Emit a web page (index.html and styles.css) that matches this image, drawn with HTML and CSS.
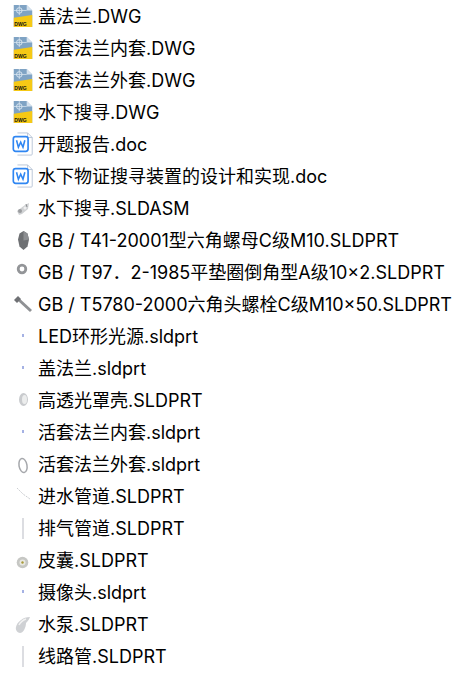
FILE: index.html

```html
<!DOCTYPE html>
<html lang="zh-CN">
<head>
  <meta charset="UTF-8">
  <title>文件列表</title>
  <meta name="viewport" content="width=device-width, initial-scale=1.0">
  <link rel="stylesheet" href="styles.css">
</head>
<body>
  <ul class="file-list">
    <li class="file"><svg class="icon" viewBox="0 0 24 26"><path d="M2 1h14l6 6v18H2z" fill="#7fa3c4"/><path d="M16 1l6 6h-6z" fill="#d5e2ee"/><circle cx="8" cy="7" r="3" fill="none" stroke="#dce8f2"/><path d="M2 7h14M8 1v11" stroke="#dce8f2" stroke-width=".8"/><path d="M2 15l20-3v13H2z" fill="#f6c915"/><text x="2.500" y="24" class="dwg-label">DWG</text></svg><span>盖法兰.DWG</span></li>
    <li class="file"><svg class="icon" viewBox="0 0 24 26"><path d="M2 1h14l6 6v18H2z" fill="#7fa3c4"/><path d="M16 1l6 6h-6z" fill="#d5e2ee"/><circle cx="8" cy="7" r="3" fill="none" stroke="#dce8f2"/><path d="M2 7h14M8 1v11" stroke="#dce8f2" stroke-width=".8"/><path d="M2 15l20-3v13H2z" fill="#f6c915"/><text x="2.500" y="24" class="dwg-label">DWG</text></svg><span>活套法兰内套.DWG</span></li>
    <li class="file"><svg class="icon" viewBox="0 0 24 26"><path d="M2 1h14l6 6v18H2z" fill="#7fa3c4"/><path d="M16 1l6 6h-6z" fill="#d5e2ee"/><circle cx="8" cy="7" r="3" fill="none" stroke="#dce8f2"/><path d="M2 7h14M8 1v11" stroke="#dce8f2" stroke-width=".8"/><path d="M2 15l20-3v13H2z" fill="#f6c915"/><text x="2.500" y="24" class="dwg-label">DWG</text></svg><span>活套法兰外套.DWG</span></li>
    <li class="file"><svg class="icon" viewBox="0 0 24 26"><path d="M2 1h14l6 6v18H2z" fill="#7fa3c4"/><path d="M16 1l6 6h-6z" fill="#d5e2ee"/><circle cx="8" cy="7" r="3" fill="none" stroke="#dce8f2"/><path d="M2 7h14M8 1v11" stroke="#dce8f2" stroke-width=".8"/><path d="M2 15l20-3v13H2z" fill="#f6c915"/><text x="2.500" y="24" class="dwg-label">DWG</text></svg><span>水下搜寻.DWG</span></li>
    <li class="file"><svg class="icon" viewBox="0 0 24 26"><path d="M6 1h11l5 5v18a1 1 0 0 1-1 1H6" fill="#fff" stroke="#b6c3d6"/><path d="M17 1v5h5" fill="none" stroke="#b6c3d6"/><rect x="1.500" y="5" width="16" height="16" rx="2.500" fill="#fff" stroke="#2f86f2" stroke-width="1.800"/><path d="M5 9l2 7.500 2.500-5.500 2.500 5.500 2-7.500" fill="none" stroke="#2f86f2" stroke-width="1.700"/></svg><span>开题报告.doc</span></li>
    <li class="file"><svg class="icon" viewBox="0 0 24 26"><path d="M6 1h11l5 5v18a1 1 0 0 1-1 1H6" fill="#fff" stroke="#b6c3d6"/><path d="M17 1v5h5" fill="none" stroke="#b6c3d6"/><rect x="1.500" y="5" width="16" height="16" rx="2.500" fill="#fff" stroke="#2f86f2" stroke-width="1.800"/><path d="M5 9l2 7.500 2.500-5.500 2.500 5.500 2-7.500" fill="none" stroke="#2f86f2" stroke-width="1.700"/></svg><span>水下物证搜寻装置的设计和实现.doc</span></li>
    <li class="file">
      <svg class="icon" viewBox="0 0 24 24"><path d="M6 15l8-6 4-2-1 6-6 5-3 1z" fill="#cfd1d3"/><circle cx="9" cy="15" r="2" fill="#9a9c9f"/><circle cx="14" cy="12" r="1.500" fill="#eeeeef"/><path d="M15 8l1 3" stroke="#8f9194"/></svg>
      <span>水下搜寻.SLDASM</span>
    </li>
    <li class="file">
      <svg class="icon" viewBox="0 0 24 24"><path d="M12.500 3l4 2.500 1.500 6-1.500 7-4 3.500-4-3.500L7 11.500l1.500-6z" fill="#6e7073"/><path d="M12.500 3l4 2.500 1.500 6-5.500 1z" fill="#8d8f92"/></svg>
      <span>GB / T41-20001型六角螺母C级M10.SLDPRT</span>
    </li>
    <li class="file">
      <svg class="icon" viewBox="0 0 24 24"><circle cx="11" cy="9" r="3.800" fill="none" stroke="#939598" stroke-width="2.800"/></svg>
      <span>GB / T97．2-1985平垫圈倒角型A级10×2.SLDPRT</span>
    </li>
    <li class="file">
      <svg class="icon" viewBox="0 0 24 24"><path d="M7 7l13 12" stroke="#8f9194" stroke-width="3"/><path d="M3 8l4-4 3 3-4 4z" fill="#6f7174"/></svg>
      <span>GB / T5780-2000六角头螺栓C级M10×50.SLDPRT</span>
    </li>
    <li class="file">
      <svg class="icon" viewBox="0 0 24 24"><path d="M12 10v3" stroke="#4a64c8"/></svg>
      <span>LED环形光源.sldprt</span>
    </li>
    <li class="file">
      <svg class="icon" viewBox="0 0 24 24"><path d="M12 10v3" stroke="#4a64c8"/></svg>
      <span>盖法兰.sldprt</span>
    </li>
    <li class="file">
      <svg class="icon" viewBox="0 0 24 24"><ellipse cx="12.500" cy="11.500" rx="4.500" ry="6.500" fill="#c9cbce"/><ellipse cx="13.500" cy="11.500" rx="2.500" ry="4.500" fill="#eceded"/></svg>
      <span>高透光罩壳.SLDPRT</span>
    </li>
    <li class="file">
      <svg class="icon" viewBox="0 0 24 24"><path d="M12 10v3" stroke="#4a64c8"/></svg>
      <span>活套法兰内套.sldprt</span>
    </li>
    <li class="file">
      <svg class="icon" viewBox="0 0 24 24"><ellipse cx="12" cy="13.500" rx="4" ry="7" transform="rotate(-10 12 13.500)" fill="none" stroke="#a6a8ac" stroke-width="1.500"/></svg>
      <span>活套法兰外套.sldprt</span>
    </li>
    <li class="file">
      <svg class="icon" viewBox="0 0 24 24"><path d="M6 4l6 6 7 5" fill="none" stroke="#ccced2" stroke-dasharray="2 1"/></svg>
      <span>进水管道.SLDPRT</span>
    </li>
    <li class="file">
      <svg class="icon" viewBox="0 0 24 24"><path d="M12 2v21" stroke="#b9bbc4"/></svg>
      <span>排气管道.SLDPRT</span>
    </li>
    <li class="file">
      <svg class="icon" viewBox="0 0 24 24"><circle cx="11.500" cy="14.500" r="5.800" fill="#c6c7c4"/><circle cx="11.500" cy="14.500" r="3" fill="#e9e9e2"/><circle cx="11.500" cy="14.500" r="1.200" fill="#a99a3a"/></svg>
      <span>皮囊.SLDPRT</span>
    </li>
    <li class="file">
      <svg class="icon" viewBox="0 0 24 24"><path d="M12 10v3" stroke="#4a64c8"/></svg>
      <span>摄像头.sldprt</span>
    </li>
    <li class="file">
      <svg class="icon" viewBox="0 0 24 24"><path d="M5 15c1-5 7-10 14-10-1 3-3 5-4 6 0 5-3 10-6 10-2 0-5-3-4-6z" fill="#cfd1d4"/><path d="M8 13c1-2 4-5 7-6" stroke="#f2f2f2" stroke-width="1.500" fill="none"/></svg>
      <span>水泵.SLDPRT</span>
    </li>
    <li class="file">
      <svg class="icon" viewBox="0 0 24 24"><path d="M12 2v21" stroke="#b9bbc4"/></svg>
      <span>线路管.SLDPRT</span>
    </li>
  </ul>
</body>
</html>
```

FILE: styles.css

```css
body { margin: 0; background: #fff; font-family: Inter, "Noto Sans CJK SC", sans-serif; color: #000; }
.dwg-label { font-family: "Liberation Sans", sans-serif; font-size: 5.500px; font-weight: bold; fill: #111; }
.file-list { list-style: none; margin: 0; padding: 0; }
.file { display: flex; align-items: center; gap: 3px; height: 32px; padding-left: 11px; font-size: 18px; white-space: nowrap; }
.file span { padding-bottom: 2px; }
.icon { width: 24px; height: 24px; flex: none; }
```
